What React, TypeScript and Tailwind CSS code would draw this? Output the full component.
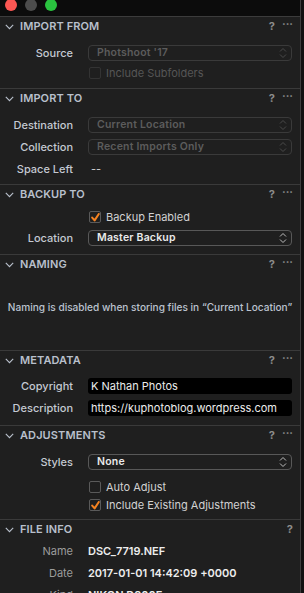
import React from "react";

const font = { fontFamily: "Inter, 'Noto Sans', sans-serif" };

function Chevron() {
  return (
    <svg width="9" height="6" viewBox="0 0 9 6" className="shrink-0">
      <polyline points="0.8,0.8 4.5,4.6 8.2,0.8" fill="none" stroke="#b9c0cc" strokeWidth="1.1" />
    </svg>
  );
}

function UpDown() {
  return (
    <svg width="8" height="12" viewBox="0 0 8 12" className="shrink-0">
      <polyline points="1,4.5 4,1.5 7,4.5" fill="none" stroke="currentColor" strokeWidth="1" />
      <polyline points="1,7.5 4,10.5 7,7.5" fill="none" stroke="currentColor" strokeWidth="1" />
    </svg>
  );
}

function Header({ title, more = true }: { title: string; more?: boolean }) {
  return (
    <div className="h-[19px] flex items-center pl-[5px] pr-[7px]">
      <Chevron />
      <span className="ml-[6px] text-[11px] font-semibold text-[#b9c0cc] tracking-[0.1px]">{title}</span>
      <span className="ml-auto text-[11px] font-bold text-[#8c8c8c]">?</span>
      {more && <span className="ml-[7px] text-[11px] font-bold text-[#8c8c8c] leading-none -mt-[4px]">···</span>}
    </div>
  );
}

function Label({ children, dim }: { children: React.ReactNode; dim?: boolean }) {
  return (
    <div className={`w-[73px] shrink-0 text-right text-[11px] ${dim ? "text-[#9c9c9c]" : "text-[#c4c9d2] font-medium"}`}>
      {children}
    </div>
  );
}

function Select({ value, disabled }: { value: string; disabled?: boolean }) {
  return (
    <div
      className={`ml-[15px] w-[204px] h-[16px] rounded-[4px] border flex items-center pl-[8px] pr-[4px] ${
        disabled ? "border-[#3a3a3a] text-[#5c5c5c]" : "border-[#585858] text-[#eaeaea]"
      }`}
    >
      <span className="text-[10.5px] font-semibold tracking-[0.2px]">{value}</span>
      <span className={`ml-auto ${disabled ? "text-[#4a4a4a]" : "text-[#bdbdbd]"}`}>
        <UpDown />
      </span>
    </div>
  );
}

function Field({ value }: { value: string }) {
  return (
    <div className="ml-[15px] w-[204px] h-[16px] rounded-[3px] bg-black flex items-center pl-[3px] text-[11px] text-[#ececec]">
      {value}
    </div>
  );
}

function Check({ label, checked, disabled }: { label: string; checked?: boolean; disabled?: boolean }) {
  return (
    <div className="flex items-center h-[16px] pl-[89px]">
      <div
        className={`w-[12px] h-[12px] rounded-[2px] border flex items-center justify-center ${
          disabled ? "border-[#333]" : "border-[#5a5a5a]"
        }`}
      >
        {checked && (
          <svg width="9" height="9" viewBox="0 0 9 9">
            <polyline points="1.2,4.6 3.6,7.4 7.8,1" fill="none" stroke="#f58220" strokeWidth="2" strokeLinecap="round" strokeLinejoin="round" />
          </svg>
        )}
      </div>
      <span className={`ml-[5px] text-[11px] ${disabled ? "text-[#565656]" : "text-[#d2d2d2]"}`}>{label}</span>
    </div>
  );
}

function Row({ children }: { children: React.ReactNode }) {
  return <div className="flex items-center h-[16px]">{children}</div>;
}

export default function App() {
  return (
    <div className="w-[304px] h-[593px] overflow-hidden bg-[#111] flex" style={font}>
      <div className="w-[301px] h-full flex flex-col bg-[#1f1f1f] border-r border-[#3e3e3e]">
        {/* Title bar */}
        <div className="h-[17px] shrink-0 bg-[#0c0c0c] flex items-start gap-[8px] pl-[5px] border-b border-[#3c3c3c]">
          <div className="w-[12px] h-[12px] -mt-[1px] rounded-full bg-[#fc5753]" />
          <div className="w-[12px] h-[12px] -mt-[1px] rounded-full bg-[#4c4c4c]" />
          <div className="w-[12px] h-[12px] -mt-[1px] rounded-full bg-[#2ac33f]" />
        </div>

        {/* Import From */}
        <section className="h-[72px] shrink-0 border-b border-[#3a3a3a]">
          <Header title="IMPORT FROM" />
          <div className="mt-[9px]">
            <Row>
              <Label>Source</Label>
              <Select value="Photshoot '17" disabled />
            </Row>
          </div>
          <div className="mt-[4px]">
            <Check label="Include Subfolders" disabled />
          </div>
        </section>

        {/* Import To */}
        <section className="h-[96px] shrink-0 border-b border-[#3a3a3a]">
          <Header title="IMPORT TO" />
          <div className="mt-[9px] flex flex-col gap-[6px]">
            <Row>
              <Label>Destination</Label>
              <Select value="Current Location" disabled />
            </Row>
            <Row>
              <Label>Collection</Label>
              <Select value="Recent Imports Only" disabled />
            </Row>
            <Row>
              <Label>Space Left</Label>
              <span className="ml-[18px] text-[11px] text-[#cfcfcf]">--</span>
            </Row>
          </div>
        </section>

        {/* Backup To */}
        <section className="h-[70px] shrink-0 border-b border-[#3a3a3a]">
          <Header title="BACKUP TO" />
          <div className="mt-[5px]">
            <Check label="Backup Enabled" checked />
          </div>
          <div className="mt-[5px]">
            <Row>
              <Label>Location</Label>
              <Select value="Master Backup" />
            </Row>
          </div>
        </section>

        {/* Naming */}
        <section className="h-[96px] shrink-0 border-b border-[#3a3a3a]">
          <Header title="NAMING" />
          <div className="mt-[26px] text-center text-[10.1px] text-[#bcc3cf] font-medium">
            Naming is disabled when storing files in “Current Location”
          </div>
        </section>

        {/* Metadata */}
        <section className="h-[75px] shrink-0 border-b border-[#3a3a3a]">
          <Header title="METADATA" />
          <div className="mt-[8px] flex flex-col gap-[6px]">
            <Row>
              <Label>Copyright</Label>
              <Field value="K Nathan Photos" />
            </Row>
            <Row>
              <Label>Description</Label>
              <Field value="https://kuphotoblog.wordpress.com" />
            </Row>
          </div>
        </section>

        {/* Adjustments */}
        <section className="h-[94px] shrink-0 border-b border-[#3a3a3a]">
          <Header title="ADJUSTMENTS" />
          <div className="mt-[9px]">
            <Row>
              <Label>Styles</Label>
              <Select value="None" />
            </Row>
          </div>
          <div className="mt-[9px] flex flex-col gap-[2px]">
            <Check label="Auto Adjust" />
            <Check label="Include Existing Adjustments" checked />
          </div>
        </section>

        {/* File Info */}
        <section className="shrink-0">
          <Header title="FILE INFO" more={false} />
          <div className="mt-[4px] flex flex-col gap-[6px]">
            {[
              ["Name", "DSC_7719.NEF"],
              ["Date", "2017-01-01 14:42:09 +0000"],
              ["Kind", "NIKON D800E"],
            ].map(([k, v]) => (
              <Row key={k}>
                <Label dim>{k}</Label>
                <span className="ml-[15px] text-[11px] font-semibold text-[#ededed]">{v}</span>
              </Row>
            ))}
          </div>
        </section>
      </div>
    </div>
  );
}
